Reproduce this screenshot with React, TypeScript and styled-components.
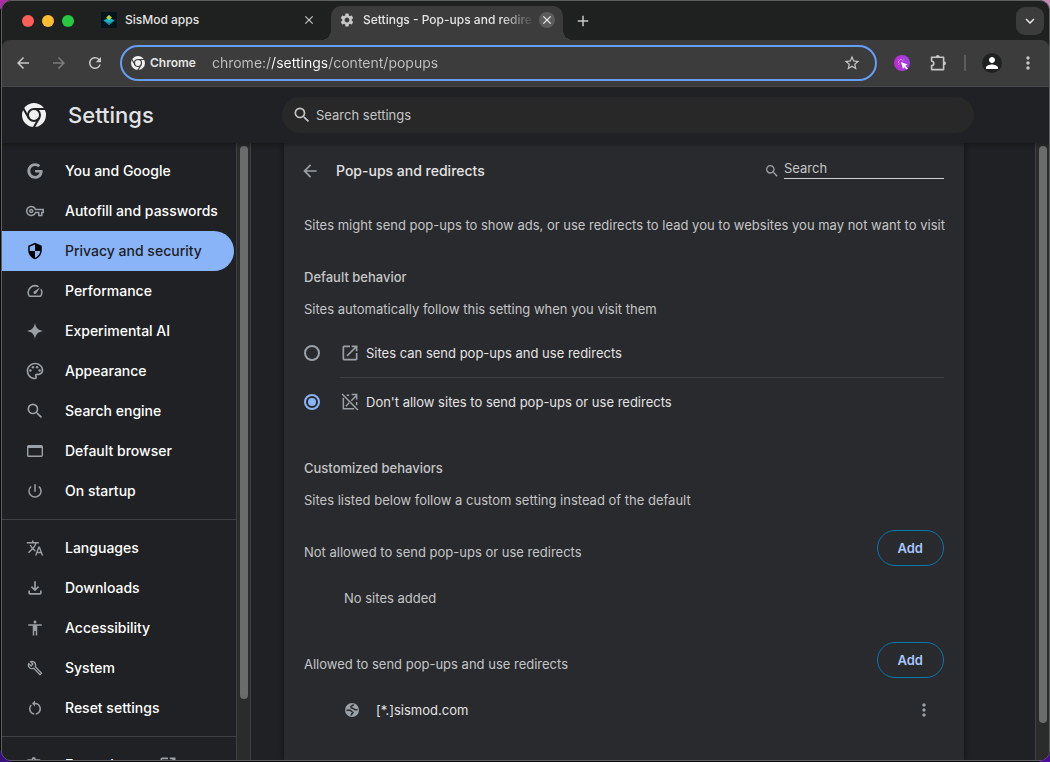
import React, { useState } from "react";
import styled, { createGlobalStyle, css } from "styled-components";
import {
  MdAccessibility,
  MdAdd,
  MdArrowBack,
  MdArrowForward,
  MdClose,
  MdKeyboardArrowDown,
  MdMoreVert,
  MdOpenInNew,
  MdOutlineBuild,
  MdOutlineExtension,
  MdOutlineFileDownload,
  MdOutlinePalette,
  MdOutlineVpnKey,
  MdPerson,
  MdPowerSettingsNew,
  MdRefresh,
  MdRestartAlt,
  MdSearch,
  MdSecurity,
  MdSettings,
  MdSpeed,
  MdStarBorder,
  MdTranslate,
} from "react-icons/md";
import { FaGoogle } from "react-icons/fa";

const color = {
  frame: "#1f2120",
  toolbar: "#3c3c3c",
  page: "#202124",
  card: "#292a2d",
  line: "#3f4042",
  text: "#e3e3e3",
  muted: "#c4c5c6",
  icon: "#9aa0a6",
  accent: "#8ab4f8",
  thumb: "#6b6b6b",
  track: "#2b2b2b",
};

const GlobalStyle = createGlobalStyle`
  *, *::before, *::after { box-sizing: border-box; }
  body {
    margin: 0;
    min-height: 100vh;
    background:
      radial-gradient(circle at 0 0, #b12aa5 8px, transparent 10px),
      radial-gradient(circle at 100% 0, #c58ab8 8px, transparent 10px),
      radial-gradient(circle at 0 100%, #3a1080 10px, transparent 12px),
      radial-gradient(circle at 100% 100%, #4d0a9e 10px, transparent 12px),
      #0b0b0d;
    font-family: Inter, "Liberation Sans", sans-serif;
    font-size: 13px;
    line-height: 20px;
    color: ${color.text};
  }
  button, input { font: inherit; color: inherit; }
  h1, h2, h3, p, ul { margin: 0; padding: 0; }
  svg { display: block; flex: none; }
`;

const Window = styled.div`
  display: flex;
  flex-direction: column;
  height: calc(100vh - 1px);
  margin-left: 1px;
  border: 1px solid #5d5f5f;
  border-radius: 10px;
  overflow: hidden;
  background: ${color.frame};
`;

const IconButton = styled.button<{ $size?: number; $tint?: string }>`
  display: flex;
  align-items: center;
  justify-content: center;
  flex: none;
  width: ${(p) => p.$size ?? 28}px;
  height: ${(p) => p.$size ?? 28}px;
  padding: 0;
  border: 0;
  border-radius: 50%;
  background: none;
  color: ${(p) => p.$tint ?? "#c7c7c7"};
`;

/* Tab strip */
const TabStrip = styled.div`
  display: flex;
  align-items: flex-end;
  flex: none;
  height: 39px;
  padding: 0 5px 0 20px;
`;

const Lights = styled.div`
  display: flex;
  align-self: center;
  gap: 8px;
  margin-right: 19px;
`;

const Light = styled.button<{ $fill: string }>`
  width: 12px;
  height: 12px;
  padding: 0;
  border: 0;
  border-radius: 50%;
  background: ${(p) => p.$fill};
`;

const Tab = styled.div<{ $active?: boolean }>`
  position: relative;
  display: flex;
  align-items: center;
  flex: 0 1 ${(p) => (p.$active ? 232 : 238)}px;
  min-width: 0;
  height: 34px;
  padding: 0 ${(p) => (p.$active ? 8 : 14)}px 6px 8px;
  border-radius: 10px 10px 0 0;
  ${(p) =>
    p.$active &&
    css`
      background: ${color.toolbar};
      &::before,
      &::after {
        content: "";
        position: absolute;
        bottom: 0;
        width: 10px;
        height: 10px;
      }
      &::before {
        right: 100%;
        background: radial-gradient(circle at 0 0, transparent 10px, ${color.toolbar} 10px);
      }
      &::after {
        left: 100%;
        background: radial-gradient(circle at 100% 0, transparent 10px, ${color.toolbar} 10px);
      }
    `}
`;

const TabTitle = styled.button<{ $fade?: boolean }>`
  flex: 1;
  min-width: 0;
  margin: 0 8px;
  padding: 0;
  border: 0;
  background: none;
  text-align: left;
  font-size: 12px;
  font-weight: 500;
  white-space: nowrap;
  overflow: hidden;
  ${(p) => p.$fade && css`
    mask-image: linear-gradient(90deg, #000 82%, transparent 102%);
  `}
`;

const TabClose = styled(IconButton)<{ $active?: boolean }>`
  width: 16px;
  height: 16px;
  background: ${(p) => (p.$active ? "#5c5c5c" : "transparent")};
  color: ${(p) => (p.$active ? "#f1f1f1" : "#c7c7c7")};
`;

const NewTab = styled(IconButton)`
  align-self: center;
  margin-left: 6px;
`;

const TabSearch = styled(IconButton)`
  align-self: center;
  margin-left: auto;
  border-radius: 9px;
  background: ${color.toolbar};
  color: #e8e8e8;
`;

/* Toolbar */
const Toolbar = styled.div`
  display: flex;
  align-items: center;
  flex: none;
  height: 47px;
  padding: 0 7px;
  border-bottom: 1px solid #4a4b4d;
  border-radius: 8px 8px 0 0;
  background: ${color.toolbar};
`;

const NavButtons = styled.div`
  display: flex;
  gap: 8px;
  margin-right: 11px;
`;

const Omnibox = styled.div`
  display: flex;
  align-items: center;
  flex: 1;
  min-width: 0;
  height: 36px;
  padding: 0 9px;
  border: 2px solid #669df6;
  border-radius: 18px;
`;

const SiteChip = styled.button`
  display: flex;
  align-items: center;
  gap: 5px;
  flex: none;
  padding: 0;
  border: 0;
  background: none;
  font-size: 12px;
  font-weight: 600;
`;

/* The host part of the address is brighter than the rest. */
const Address = styled.input`
  flex: 1;
  min-width: 0;
  margin-left: 16px;
  padding: 0;
  border: 0;
  outline: 0;
  background: linear-gradient(90deg, #c2c2c2 60px, #ffffff 60px 115px, #c2c2c2 115px);
  background-clip: text;
  -webkit-text-fill-color: transparent;
  font-size: 14px;
`;

const Actions = styled.div`
  display: flex;
  align-items: center;
  gap: 8px;
  margin-left: 11px;
`;

const Separator = styled.span`
  width: 2px;
  height: 16px;
  margin: 0 4px;
  background: #5d5d5d;
`;

const Avatar = styled(IconButton)`
  width: 20px;
  height: 20px;
  background: ${color.frame};
  margin: 0 4px;
`;

/* Settings header */
const Header = styled.header`
  display: flex;
  align-items: center;
  flex: none;
  height: 56px;
  padding-left: 20px;
  background: ${color.page};
  box-shadow: 0 2px 4px rgba(0, 0, 0, 0.3);
  z-index: 1;
`;

const Brand = styled.div`
  display: flex;
  align-items: center;
  gap: 22px;
  width: 260px;
`;

const Title = styled.h1`
  font-size: 22px;
  line-height: 28px;
  font-weight: 500;
`;

const SearchBar = styled.label`
  display: flex;
  align-items: center;
  gap: 4px;
  flex: 0 1 692px;
  height: 36px;
  padding: 0 10px;
  border-radius: 18px;
  background: #282828;
  color: ${color.muted};
`;

const BareInput = styled.input`
  flex: 1;
  min-width: 0;
  padding: 0;
  border: 0;
  outline: 0;
  background: none;
  &::placeholder {
    color: ${color.muted};
    opacity: 1;
  }
`;

/* Body */
const Body = styled.div`
  display: flex;
  flex: 1;
  min-height: 0;
  background: ${color.page};
`;

const Sidebar = styled.nav`
  flex: none;
  width: 234px;
  padding-top: 8px;
  overflow: hidden;
`;

const MenuItem = styled.a<{ $active?: boolean }>`
  display: flex;
  align-items: center;
  gap: 20px;
  height: 40px;
  margin-right: 2px;
  padding-left: 23px;
  border-radius: 0 20px 20px 0;
  font-size: 14px;
  font-weight: 500;
  text-decoration: none;
  white-space: nowrap;
  color: ${(p) => (p.$active ? color.page : "#ffffff")};
  background: ${(p) => (p.$active ? color.accent : "none")};
`;

const MenuIcon = styled.span<{ $active?: boolean }>`
  display: flex;
  align-items: center;
  justify-content: center;
  width: 20px;
  height: 20px;
  color: ${(p) => (p.$active ? "#000000" : color.icon)};
`;

const MenuDivider = styled.hr`
  margin: 8px 0;
  border: 0;
  border-top: 1px solid ${color.line};
`;

const Track = styled.div<{ $edge?: boolean }>`
  flex: none;
  width: ${(p) => (p.$edge ? 14 : 15)}px;
  padding: 3px 2px 0 3px;
  border: solid #404143;
  border-width: 0 ${(p) => (p.$edge ? 0 : 1)}px 0 1px;
  background: ${color.track};
`;

const Thumb = styled.div<{ $share: number }>`
  width: 8px;
  height: ${(p) => p.$share}%;
  border-radius: 4px;
  background: ${color.thumb};
`;

const Main = styled.main`
  flex: 1;
  min-width: 0;
  padding: 0 32px 0 33px;
  overflow: hidden;
`;

const Card = styled.section`
  max-width: 680px;
  min-height: 100%;
  padding: 0 20px;
  background: ${color.card};
  box-shadow: 0 0 5px 1px rgba(0, 0, 0, 0.4);
`;

const CardHeader = styled.div`
  display: flex;
  align-items: center;
  height: 56px;
`;

const BackButton = styled(IconButton)`
  width: 20px;
  margin: 0 16px 0 -4px;
`;

const CardTitle = styled.h2`
  flex: 1;
  font-size: 14px;
  line-height: 20px;
  font-weight: 500;
`;

const Find = styled.label`
  display: flex;
  align-items: center;
  gap: 4px;
  color: ${color.icon};
`;

const FindInput = styled(BareInput)`
  flex: none;
  width: 160px;
  height: 20px;
  margin-bottom: 4px;
  padding-bottom: 2px;
  border-bottom: 1px solid #d0d0d0;
  color: ${color.text};
`;

const Intro = styled.p`
  padding: 16px 0;
  color: ${color.muted};
  white-space: nowrap;
`;

const Section = styled.section<{ $gap: number }>`
  padding-top: ${(p) => p.$gap}px;
`;

const SectionTitle = styled.h3`
  font-size: 13px;
  line-height: 20px;
  font-weight: 500;
  color: ${color.muted};
`;

const Hint = styled.p`
  margin: 12px 0 10px;
  color: ${color.muted};
`;

const Option = styled.label`
  display: flex;
  align-items: center;
  height: 48px;
  color: ${color.icon};
  span {
    margin-left: 6px;
    color: ${color.text};
  }
`;

const Radio = styled.input`
  appearance: none;
  display: grid;
  place-items: center;
  width: 16px;
  height: 16px;
  margin: 0 20px 0 0;
  border: 2px solid ${color.icon};
  border-radius: 50%;
  &:checked {
    border-color: ${color.accent};
  }
  &:checked::after {
    content: "";
    width: 8px;
    height: 8px;
    border-radius: 50%;
    background: ${color.accent};
  }
`;

const OptionDivider = styled.hr`
  margin: 0 0 0 36px;
  border: 0;
  border-top: 1px solid ${color.line};
`;

const ListHeader = styled.div`
  display: flex;
  align-items: flex-end;
  justify-content: space-between;
  height: 46px;
  p {
    padding-bottom: 4px;
    color: ${color.muted};
  }
`;

const AddButton = styled.button`
  height: 36px;
  padding: 0 20px;
  border: 1px solid #0a77ad;
  border-radius: 18px;
  background: none;
  color: #a8c7fa;
  font-weight: 600;
`;

const SiteRow = styled.div`
  display: flex;
  align-items: center;
  height: 66px;
  padding: 0 6px 2px 40px;
  color: ${color.muted};
`;

const SiteName = styled.span`
  flex: 1;
  margin-left: 16px;
  color: ${color.text};
`;

const ChromeLogo = ({ size, gap }: { size: number; gap: string }) => (
  <svg width={size} height={size} viewBox="0 0 24 24" aria-hidden="true">
    <circle cx="12" cy="12" r="12" fill="#f1f1f1" />
    <circle cx="12" cy="12" r="6" fill="#f1f1f1" stroke={gap} strokeWidth="2" />
    <g stroke={gap} strokeWidth="2">
      <path d="M12 6h12" />
      <path d="M12 6h12" transform="rotate(120 12 12)" />
      <path d="M12 6h12" transform="rotate(240 12 12)" />
    </g>
  </svg>
);

const SisModIcon = () => (
  <svg width="16" height="16" viewBox="0 0 16 16" aria-hidden="true">
    <rect width="16" height="16" fill="#05131c" />
    <path d="M2.500 8.500 8 5.500l5.500 3L8 13z" fill="#17b3c4" />
    <path d="M2.500 8.500 8 11l5.500-2.500L8 13z" fill="#0b7d92" />
    <path d="M5 5.500 8 3l3 2.500L8 8z" fill="#b8d432" />
  </svg>
);

const ClickIcon = () => (
  <svg width="16" height="16" viewBox="0 0 16 16" aria-hidden="true">
    <defs>
      <linearGradient id="click" x1="0" x2="1">
        <stop offset="0" stopColor="#c02bd0" />
        <stop offset="1" stopColor="#9a45e6" />
      </linearGradient>
    </defs>
    <circle cx="8" cy="8" r="8" fill="url(#click)" />
    <path d="M7 7l6.500 2.500-2.300 1.200 2.700 2.700-1.200 1.200-2.700-2.700L9 14z" fill="#fff" />
    <path d="M7 5V4M5 7H4M5.500 5.500l-.8-.8M8.800 5.500l.8-.8M5.500 8.700l-.8.800" stroke="#fff" strokeWidth=".8" />
  </svg>
);

const PuzzleIcon = () => (
  <svg width="18" height="18" viewBox="0 0 18 18" fill="none" stroke="currentColor" strokeWidth="1.600" aria-hidden="true">
    <path d="M2.600 3.200h12v12.400h-12v-4a2.200 2.200 0 0 0 0-4.400z" strokeLinejoin="round" />
    <path d="M6.700 3a2 2 0 0 1 4 0M15 7.300a2 2 0 0 1 0 4z" fill="currentColor" stroke="none" />
  </svg>
);

const SparkIcon = () => (
  <svg width="16" height="16" viewBox="0 0 16 16" fill="currentColor" aria-hidden="true">
    <path d="M8 0c.8 4.800 3.200 7.200 8 8-4.800.8-7.200 3.200-8 8-.8-4.800-3.200-7.200-8-8 4.800-.8 7.200-3.200 8-8z" />
  </svg>
);

const BrowserIcon = () => (
  <svg width="16" height="12" viewBox="0 0 16 12" aria-hidden="true">
    <rect x=".7" y=".7" width="14.600" height="10.600" rx="1" fill="none" stroke="currentColor" strokeWidth="1.400" />
    <path d="M1 1h14v2H1z" fill="currentColor" />
  </svg>
);

const PopupOffIcon = () => (
  <svg width="20" height="20" viewBox="0 0 24 24" fill="none" stroke="currentColor" strokeWidth="1.800" aria-hidden="true">
    <path d="M4 7v13h13M8 4h3M14 3h6v6M20 12v4M20 4l-6.500 6.500M11 13l-4 4M2.500 2.500l19 19" />
  </svg>
);

const GlobeIcon = () => (
  <svg width="16" height="16" viewBox="0 0 16 16" aria-hidden="true">
    <circle cx="8" cy="8" r="7" fill={color.icon} />
    <path
      d="M2.500 8.200h3.200c1.500 0 1.500 1.600 3 1.600M9.500 2.500c-.3 1.500-2.700.9-2.700 2.600 0 1.500 2.400.6 3 1.800.5 1 2 .8 3.700.7M9 9.800c.3 1.700-1.800 1.300-1.800 3.700"
      fill="none"
      stroke={color.card}
      strokeWidth="1.500"
    />
  </svg>
);

type Entry = { label: string; icon: React.ReactNode; active?: boolean; external?: boolean };

const groups: Entry[][] = [
  [
    { label: "You and Google", icon: <FaGoogle size={16} /> },
    { label: "Autofill and passwords", icon: <MdOutlineVpnKey size={18} /> },
    { label: "Privacy and security", icon: <MdSecurity size={18} />, active: true },
    { label: "Performance", icon: <MdSpeed size={18} /> },
    { label: "Experimental AI", icon: <SparkIcon /> },
    { label: "Appearance", icon: <MdOutlinePalette size={20} /> },
    { label: "Search engine", icon: <MdSearch size={20} /> },
    { label: "Default browser", icon: <BrowserIcon /> },
    { label: "On startup", icon: <MdPowerSettingsNew size={18} /> },
  ],
  [
    { label: "Languages", icon: <MdTranslate size={18} /> },
    { label: "Downloads", icon: <MdOutlineFileDownload size={20} /> },
    { label: "Accessibility", icon: <MdAccessibility size={18} /> },
    { label: "System", icon: <MdOutlineBuild size={16} /> },
    { label: "Reset settings", icon: <MdRestartAlt size={18} /> },
  ],
  [{ label: "Extensions", icon: <MdOutlineExtension size={20} />, external: true }],
];

const App = () => {
  const [allowed, setAllowed] = useState(false);
  return (
    <>
      <GlobalStyle />
      <Window>
        <TabStrip>
          <Lights>
            <Light $fill="#ff5f57" aria-label="Close window" />
            <Light $fill="#febc2e" aria-label="Minimize window" />
            <Light $fill="#28c840" aria-label="Zoom window" />
          </Lights>
          <Tab>
            <SisModIcon />
            <TabTitle>SisMod apps</TabTitle>
            <TabClose aria-label="Close tab"><MdClose size={14} /></TabClose>
          </Tab>
          <Tab $active>
            <MdSettings size={16} color="#c7c7c7" />
            <TabTitle $fade>Settings - Pop-ups and redirects</TabTitle>
            <TabClose $active aria-label="Close tab"><MdClose size={14} /></TabClose>
          </Tab>
          <NewTab aria-label="New tab"><MdAdd size={18} /></NewTab>
          <TabSearch aria-label="Search tabs"><MdKeyboardArrowDown size={18} /></TabSearch>
        </TabStrip>

        <Toolbar>
          <NavButtons>
            <IconButton aria-label="Back"><MdArrowBack size={18} /></IconButton>
            <IconButton aria-label="Forward" $tint="#7c7c7c"><MdArrowForward size={18} /></IconButton>
            <IconButton aria-label="Reload"><MdRefresh size={18} /></IconButton>
          </NavButtons>
          <Omnibox>
            <SiteChip><ChromeLogo size={14} gap={color.toolbar} />Chrome</SiteChip>
            <Address aria-label="Address" defaultValue="chrome://settings/content/popups" />
            <IconButton aria-label="Bookmark this tab"><MdStarBorder size={18} /></IconButton>
          </Omnibox>
          <Actions>
            <IconButton aria-label="Click extension"><ClickIcon /></IconButton>
            <IconButton aria-label="Extensions"><PuzzleIcon /></IconButton>
            <Separator />
            <Avatar aria-label="Profile" $tint="#ffffff"><MdPerson size={18} /></Avatar>
            <IconButton aria-label="Menu"><MdMoreVert size={20} /></IconButton>
          </Actions>
        </Toolbar>

        <Header>
          <Brand>
            <ChromeLogo size={24} gap={color.page} />
            <Title>Settings</Title>
          </Brand>
          <SearchBar>
            <MdSearch size={20} />
            <BareInput aria-label="Search settings" placeholder="Search settings" />
          </SearchBar>
        </Header>

        <Body>
          <Sidebar>
            {groups.map((group, i) => (
              <React.Fragment key={i}>
                {i > 0 && <MenuDivider />}
                {group.map((item) => (
                  <MenuItem key={item.label} href="#" $active={item.active}>
                    <MenuIcon $active={item.active}>{item.icon}</MenuIcon>
                    {item.label}
                    {item.external && <MenuIcon><MdOpenInNew size={20} /></MenuIcon>}
                  </MenuItem>
                ))}
              </React.Fragment>
            ))}
          </Sidebar>
          <Track><Thumb $share={90} /></Track>
          <Main>
            <Card>
              <CardHeader>
                <BackButton aria-label="Back to site settings" $tint={color.icon}><MdArrowBack size={20} /></BackButton>
                <CardTitle>Pop-ups and redirects</CardTitle>
                <Find>
                  <MdSearch size={16} />
                  <FindInput aria-label="Search sites" placeholder="Search" />
                </Find>
              </CardHeader>
              <Intro>
                Sites might send pop-ups to show ads, or use redirects to lead you to websites you may not want to visit
              </Intro>
              <Section $gap={16}>
                <SectionTitle>Default behavior</SectionTitle>
                <Hint>Sites automatically follow this setting when you visit them</Hint>
                <Option>
                  <Radio type="radio" name="popups" checked={allowed} onChange={() => setAllowed(true)} />
                  <MdOpenInNew size={20} />
                  <span>Sites can send pop-ups and use redirects</span>
                </Option>
                <OptionDivider />
                <Option>
                  <Radio type="radio" name="popups" checked={!allowed} onChange={() => setAllowed(false)} />
                  <PopupOffIcon />
                  <span>Don't allow sites to send pop-ups or use redirects</span>
                </Option>
              </Section>
              <Section $gap={32}>
                <SectionTitle>Customized behaviors</SectionTitle>
                <Hint>Sites listed below follow a custom setting instead of the default</Hint>
                <ListHeader>
                  <p>Not allowed to send pop-ups or use redirects</p>
                  <AddButton>Add</AddButton>
                </ListHeader>
                <SiteRow>No sites added</SiteRow>
                <ListHeader>
                  <p>Allowed to send pop-ups and use redirects</p>
                  <AddButton>Add</AddButton>
                </ListHeader>
                <SiteRow>
                  <GlobeIcon />
                  <SiteName>[*.]sismod.com</SiteName>
                  <IconButton aria-label="More actions" $tint={color.icon}><MdMoreVert size={20} /></IconButton>
                </SiteRow>
              </Section>
            </Card>
          </Main>
          <Track $edge><Thumb $share={94} /></Track>
        </Body>
      </Window>
    </>
  );
};

export default App;
